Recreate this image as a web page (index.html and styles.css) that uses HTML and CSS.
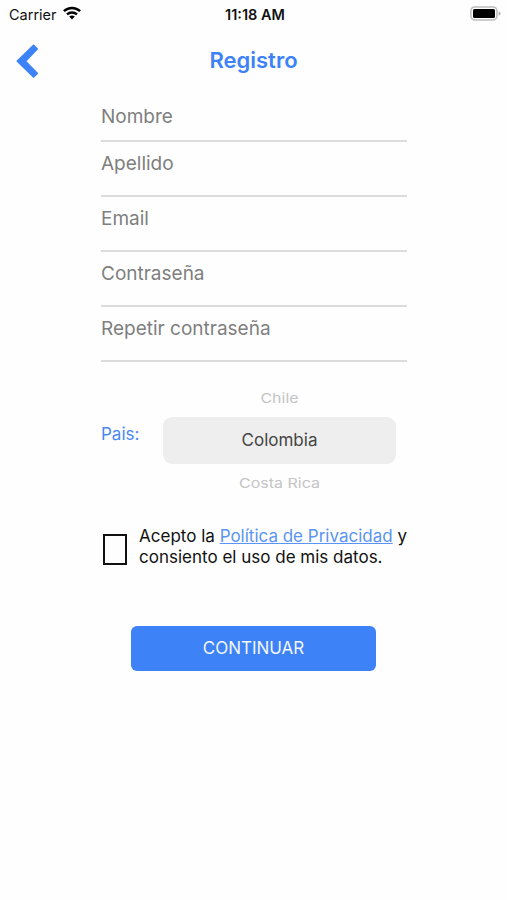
FILE: index.html
```html
<!DOCTYPE html>
<html lang="es">
<head>
<meta charset="utf-8">
<title>Registro</title>
<link rel="stylesheet" href="styles.css">
</head>
<body>
<div class="status">
  <div class="carrier"><span class="carrier-name">Carrier</span>
    <svg class="wifi" width="18" height="14" viewBox="0 0 18 14"><g fill="none" stroke="#000" stroke-width="2.5"><path d="M0.9 5.2C5.5 .9 12.5 .9 17.1 5.2"/><path d="M4 8.4C6.8 5.8 11.2 5.8 14 8.4"/></g><path d="M6.2 10.6C7.8 9.2 10.2 9.2 11.8 10.6L9 13.4Z"/></svg>
  </div>
  <span class="time">11:18 AM</span>
  <svg class="battery" width="31" height="15" viewBox="0 0 31 15"><rect x=".9" y=".9" width="26" height="13" rx="3.8" fill="#fff" stroke="#bdbdbd" stroke-width="1.5"/><rect x="3" y="3" width="22" height="9" rx="1.5"/><path d="M28.6 5.2C31.2 6.2 31.2 8.8 28.6 9.8Z" fill="#b0b0b0"/></svg>
</div>
<header class="header">
  <svg class="back" width="23" height="35" viewBox="0 0 23 35"><path d="M17 .8Q17.600 .3 18.200.8L21.800 4.400Q22.400 5 21.800 5.600L10.500 17.200L21.800 28.700Q22.400 29.300 21.800 29.900L18.200 33.500Q17.600 34 17 33.500L.8 17.800Q.2 17.200.8 16.600Z" fill="#3e82f7"/></svg>
  <h1 class="title">Registro</h1>
</header>
<main class="form">
  <div class="field"><span class="t-nombre">Nombre</span></div>
  <div class="field"><span class="t-apellido">Apellido</span></div>
  <div class="field"><span class="t-email">Email</span></div>
  <div class="field"><span class="t-clave">Contraseña</span></div>
  <div class="field"><span class="t-repetir">Repetir contraseña</span></div>
  <div class="country">
    <span class="country-label">Pais:</span>
    <div class="picker">
      <div class="option"><span>Chile</span></div>
      <div class="selected">Colombia</div>
      <div class="option below"><span>Costa Rica</span></div>
    </div>
  </div>
  <div class="terms">
    <span class="box"></span>
    <p class="terms-text"><span class="line-one">Acepto la <a class="link">Política de Privacidad</a> y</span><br><span class="line-two">consiento el uso de mis datos.</span></p>
  </div>
  <div class="button">CONTINUAR</div>
</main>
</body>
</html>
```
FILE: styles.css
```css
* { box-sizing: border-box; }
body { margin: 0; height: 900px; background: #fefefe; color: #111; font-family: Inter, "Liberation Sans", sans-serif; overflow: hidden; }
svg { display: block; }
.status { height: 28px; padding: 0 6px 0 9px; display: grid; grid-template-columns: 1fr auto 1fr; align-items: center; }
.carrier { display: flex; align-items: center; gap: 6px; font-size: 14.5px; }
.wifi { margin-top: -2px; }
.time { font-size: 14.5px; font-weight: 600; }
.battery { justify-self: end; margin-top: -2px; }
.header { height: 67px; padding: 16px 16px 0; display: grid; grid-template-columns: 1fr auto 1fr; align-items: start; }
.title { margin: 2px 0 0; font-size: 22px; line-height: 28px; font-weight: 600; color: #3e82f7; }
.form { width: 306px; margin-left: 101px; }
.field { height: 55px; padding-top: 10px; border-bottom: 2px solid #dcdcdc; font-size: 19px; line-height: 24px; color: #7f7f7f; }
.field:first-child { height: 47px; }
.country { display: flex; margin-top: 23px; height: 108px; }
.country-label { width: 62px; padding-top: 37px; font-size: 17px; line-height: 24px; color: #4a87f7; }
.picker { width: 233px; text-align: center; }
.option { height: 32px; padding-top: 4px; font-size: 16px; line-height: 18px; color: #c4c4c4; }
.option span { display: inline-block; transform: scaleY(.82); }
.below { padding-top: 10px; }
.selected { height: 47px; line-height: 47px; border-radius: 9px; background: #eee; color: #444; font-size: 17px; }
.terms { display: flex; margin-top: 33px; height: 52px; }
.box { width: 31px; height: 31px; margin: 8px 12px 0 2px; border: 2.5px solid #111; }
.terms-text { margin: 0; font-size: 17px; line-height: 21px; white-space: nowrap; }
.link { color: #5a94f4; text-decoration: underline; }
.button { width: 245px; height: 45px; margin: 48px 0 0 30px; border-radius: 6px; background: #3e82f7; color: #f1f6ff; font-size: 17px; line-height: 45px; text-align: center; }
```
